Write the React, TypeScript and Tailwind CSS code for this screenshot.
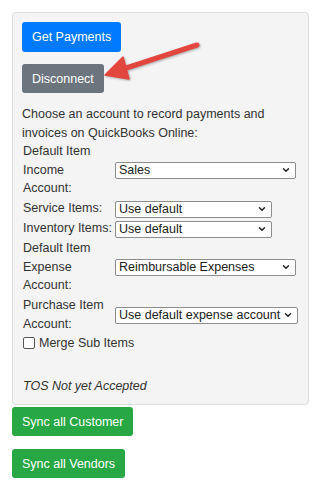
import React from "react";
import { ChevronDown } from "lucide-react";

const font = { fontFamily: '"Liberation Sans", Arial, sans-serif' };

function Select({ value, width }: { value: string; width: string }) {
  return (
    <div className={`relative h-[17px] ${width}`}>
      <select
        defaultValue={value}
        className="appearance-none w-full h-full bg-white border border-[#8d8d8d] rounded-[2px] pl-[3px] pr-[16px] text-[12.5px] leading-[15px] text-[#222] outline-none"
      >
        <option>{value}</option>
      </select>
      <ChevronDown
        className="absolute right-[5px] top-[4px] w-[10px] h-[10px] text-[#222] pointer-events-none"
        strokeWidth={3.5}
      />
    </div>
  );
}

export default function App() {
  return (
    <div className="relative w-[320px] h-[490px] bg-white pt-3 px-3 text-[#333] text-[12.5px]" style={font}>
      <div className="w-[297px] bg-[#f4f4f4] border border-[#dcdcdc] rounded-[4px] p-[9px]">
        <button className="block bg-[#007bff] text-white rounded-[3px] px-[10px] py-[6px] leading-[18px]">
          Get Payments
        </button>
        <button className="block mt-[12px] bg-[#6c757d] text-white rounded-[3px] px-[10px] py-[5.5px] leading-[18px]">
          Disconnect
        </button>

        <p className="mt-[12px] leading-[18.5px]">
          Choose an account to record payments and invoices on QuickBooks Online:
        </p>

        <div className="grid grid-cols-[93px_auto] gap-y-[1.5px] leading-[18.5px]">
          <div className="pl-[1px]">Default Item<br />Income<br />Account:</div>
          <div className="flex items-center"><Select value="Sales" width="w-[181px]" /></div>

          <div className="pl-[1px]">Service Items:</div>
          <div className="flex items-center"><Select value="Use default" width="w-[157px]" /></div>

          <div className="pl-[1px]">Inventory Items:</div>
          <div className="flex items-center"><Select value="Use default" width="w-[157px]" /></div>

          <div className="pl-[1px]">Default Item<br />Expense<br />Account:</div>
          <div className="flex items-center"><Select value="Reimbursable Expenses" width="w-[181px]" /></div>

          <div className="pl-[1px]">Purchase Item<br />Account:</div>
          <div className="flex items-center"><Select value="Use default expense account" width="w-[183px]" /></div>
        </div>

        <label className="flex items-center gap-[4px] pl-[1px] mt-[1px] leading-[18.5px]">
          <input type="checkbox" className="appearance-none w-[12px] h-[12px] bg-white border border-[#555] rounded-[2px]" />
          Merge Sub Items
        </label>

        <p className="mt-[24px] italic leading-[18.5px] pl-[1px]">TOS Not yet Accepted</p>
      </div>

      <button className="block mt-[2px] bg-[#28a745] text-white rounded-[3px] px-[10px] py-[5.5px] leading-[18px]">
        Sync all Customer
      </button>
      <button className="block mt-[13px] bg-[#28a745] text-white rounded-[3px] px-[10px] py-[5.5px] leading-[18px]">
        Sync all Vendors
      </button>

      <svg
        className="absolute left-0 top-0 pointer-events-none drop-shadow-[1px_1px_1px_rgba(0,0,0,0.3)]"
        width="320"
        height="100"
        viewBox="0 0 320 100"
      >
        <line x1="197" y1="45" x2="120" y2="70" stroke="#e2473f" strokeWidth="5" strokeLinecap="round" />
        <polygon points="105,75 123,57 129,79" fill="#e2473f" stroke="#e2473f" strokeWidth="1.5" strokeLinejoin="round" />
      </svg>
    </div>
  );
}
